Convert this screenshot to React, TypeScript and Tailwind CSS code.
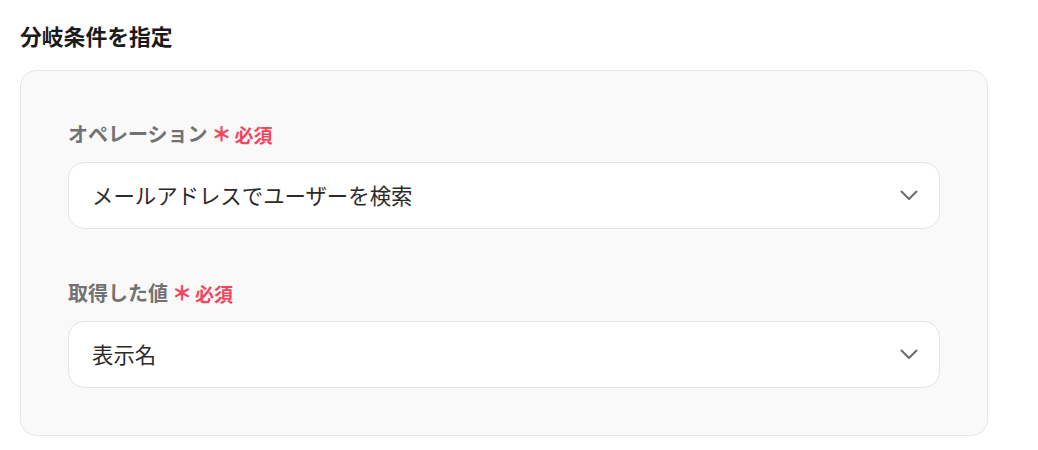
import React from 'react';

const font = { fontFamily: '"Noto Sans CJK JP", "Noto Sans", sans-serif' };

const Chevron: React.FC = () => (
  <svg width="18" height="11" viewBox="0 0 18 11" fill="none" className="text-[#6b6b6b]">
    <path d="M1.5 1.5 9 9l7.5-7.5" stroke="currentColor" strokeWidth="2" strokeLinecap="round" strokeLinejoin="round" />
  </svg>
);

const Field: React.FC<{ label: string; value: string; className?: string }> = ({ label, value, className }) => (
  <div className={className}>
    <div className="flex items-center h-[30px] mb-[13px]">
      <span className="text-[20px] font-bold text-[#727272] leading-none">{label}</span>
      <span className="ml-[4px] text-[20px] font-black text-[#f4465f] leading-none">＊</span>
      <span className="ml-[3px] text-[19px] font-semibold text-[#f4465f] leading-none">必須</span>
    </div>
    <div className="h-[67px] bg-white border border-[#e1e4e9] rounded-[16px] flex items-center justify-between pl-[23px] pr-[21px]">
      <span className="text-[21.4px] text-[#2b2b2b]">{value}</span>
      <Chevron />
    </div>
  </div>
);

const App: React.FC = () => {
  return (
    <div className="w-[1038px] h-[450px] bg-white pt-[20px] pl-[20px]" style={font}>
      <h2 className="text-[21.8px] font-semibold text-[#1a1a1a] h-[32px] leading-[32px] mb-[18px]">分岐条件を指定</h2>
      <div className="w-[968px] bg-[#f9f9f9] border border-[#e6e6e6] rounded-[16px] px-[47px] pt-[48px] pb-[47px]">
        <Field label="オペレーション" value="メールアドレスでユーザーを検索" />
        <Field label="取得した値" value="表示名" className="mt-[49px]" />
      </div>
    </div>
  );
};

export default App;
